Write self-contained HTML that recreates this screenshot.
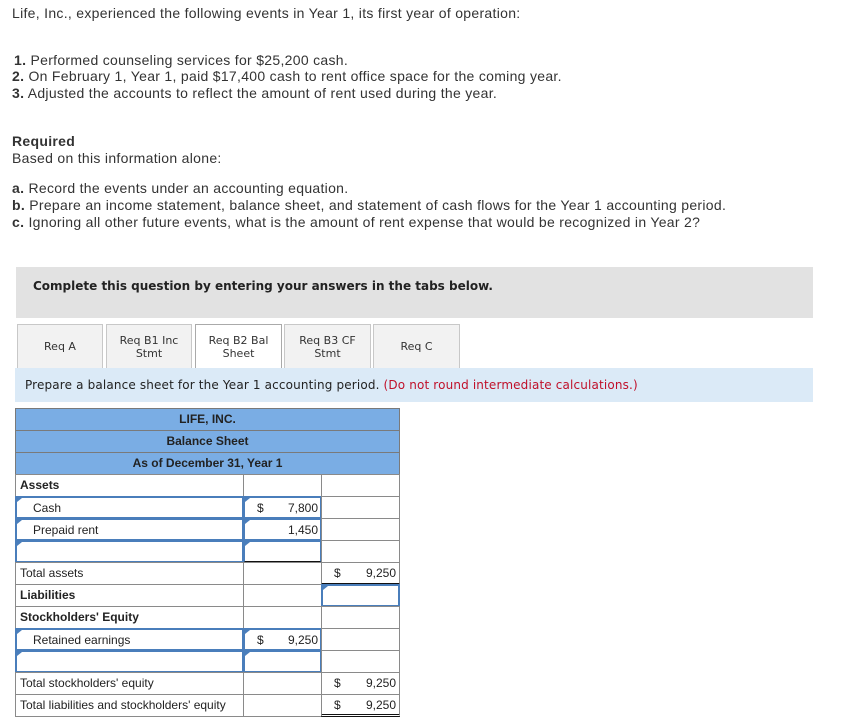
<!DOCTYPE html>
<html><head><meta charset="utf-8"><style>
body{margin:0;width:856px;height:724px;background:#fff;position:relative;font-family:"Liberation Sans",Arial,sans-serif;color:#333;overflow:hidden}
.t{position:absolute;font-size:14px;letter-spacing:0.3px;white-space:nowrap;line-height:16px}
.c{position:absolute;box-sizing:border-box;font-size:12px;line-height:20px;color:#222;white-space:nowrap}
.g{border:1px solid #8a8a8a}
.h{background:#7aade4;border:1px solid #7a7a7a;text-align:center;font-weight:bold;color:#222}
.in{border:2px solid #4a7ebb;background:#fff}
.in:before{content:"";position:absolute;left:0;top:0;border-left:5px solid #4a7ebb;border-bottom:4px solid transparent;border-top:0;width:0;height:0}
.tab{position:absolute;top:324px;height:44px;box-sizing:border-box;background:#f2f2f2;border:1px solid #c8c8c8;border-bottom:none;font-family:"DejaVu Sans",sans-serif;font-size:11px;line-height:13px;text-align:center;display:flex;align-items:center;justify-content:center;color:#333}
</style></head><body>
<div class="t" style="left:12px;top:5px">Life, Inc., experienced the following events in Year 1, its first year of operation:</div>
<div class="t" style="left:14px;top:52px"><b>1.</b> Performed counseling services for $25,200 cash.</div>
<div class="t" style="left:12px;top:68px"><b>2.</b> On February 1, Year 1, paid $17,400 cash to rent office space for the coming year.</div>
<div class="t" style="left:12px;top:85px"><b>3.</b> Adjusted the accounts to reflect the amount of rent used during the year.</div>
<div class="t" style="left:12px;top:133px"><b>Required</b></div>
<div class="t" style="left:12px;top:150px">Based on this information alone:</div>
<div class="t" style="left:12px;top:180px"><b>a.</b> Record the events under an accounting equation.</div>
<div class="t" style="left:12px;top:197px"><b>b.</b> Prepare an income statement, balance sheet, and statement of cash flows for the Year 1 accounting period.</div>
<div class="t" style="left:12px;top:214px"><b>c.</b> Ignoring all other future events, what is the amount of rent expense that would be recognized in Year 2?</div>

<div style="position:absolute;left:16px;top:267px;width:797px;height:51px;background:#e2e2e2"></div>
<div style="position:absolute;left:33px;top:279px;font-family:'DejaVu Sans',sans-serif;font-weight:bold;font-size:12px;color:#222">Complete this question by entering your answers in the tabs below.</div>

<div class="tab" style="left:17px;width:86px">Req A</div>
<div class="tab" style="left:106px;width:86px">Req B1 Inc<br>Stmt</div>
<div class="tab" style="left:195px;width:87px;background:#fff;border-color:#aaa;height:45px">Req B2 Bal<br>Sheet</div>
<div class="tab" style="left:284px;width:87px">Req B3 CF<br>Stmt</div>
<div class="tab" style="left:373px;width:87px">Req C</div>
<div style="position:absolute;left:15px;top:368px;width:798px;height:34px;background:#dbeaf7"></div>
<div style="position:absolute;left:25px;top:378px;font-family:'DejaVu Sans',sans-serif;font-size:12px;letter-spacing:0.15px;color:#222">Prepare a balance sheet for the Year 1 accounting period. <span style="color:#c0102a">(Do not round intermediate calculations.)</span></div>

<div class="c h" style="left:15px;top:408px;width:385px;height:23px">LIFE, INC.</div>
<div class="c h" style="left:15px;top:430px;width:385px;height:23px">Balance Sheet</div>
<div class="c h" style="left:15px;top:452px;width:385px;height:23px">As of December 31, Year 1</div>

<div class="c g" style="left:15px;top:474px;width:229px;height:23px;padding-left:4px;font-weight:bold">Assets</div>
<div class="c g" style="left:243px;top:474px;width:79px;height:23px"></div>
<div class="c g" style="left:321px;top:474px;width:79px;height:23px"></div>

<div class="c in" style="left:15px;top:496px;width:229px;height:23px;padding-left:16px">Cash</div>
<div class="c in" style="left:243px;top:496px;width:79px;height:23px;padding:0 2px 0 12px">$<span style="float:right">7,800</span></div>
<div class="c g" style="left:321px;top:496px;width:79px;height:23px"></div>

<div class="c in" style="left:15px;top:518px;width:229px;height:23px;padding-left:16px">Prepaid rent</div>
<div class="c in" style="left:243px;top:518px;width:79px;height:23px;padding:0 2px 0 12px"><span style="float:right">1,450</span></div>
<div class="c g" style="left:321px;top:518px;width:79px;height:23px"></div>

<div class="c in" style="left:15px;top:540px;width:229px;height:23px"></div>
<div class="c in" style="left:243px;top:540px;width:79px;height:23px;border-bottom:2px solid #111"></div>
<div class="c g" style="left:321px;top:540px;width:79px;height:23px"></div>

<div class="c g" style="left:15px;top:562px;width:229px;height:23px;padding-left:4px">Total assets</div>
<div class="c g" style="left:243px;top:562px;width:79px;height:23px"></div>
<div class="c g" style="left:321px;top:562px;width:79px;height:23px;padding:0 3px 0 12px;border-bottom:2px solid #111">$<span style="float:right">9,250</span></div>

<div class="c g" style="left:15px;top:584px;width:229px;height:23px;padding-left:4px;font-weight:bold">Liabilities</div>
<div class="c g" style="left:243px;top:584px;width:79px;height:23px"></div>
<div class="c in" style="left:321px;top:584px;width:79px;height:23px"></div>

<div class="c g" style="left:15px;top:606px;width:229px;height:23px;padding-left:4px;font-weight:bold">Stockholders' Equity</div>
<div class="c g" style="left:243px;top:606px;width:79px;height:23px"></div>
<div class="c g" style="left:321px;top:606px;width:79px;height:23px"></div>

<div class="c in" style="left:15px;top:628px;width:229px;height:23px;padding-left:16px">Retained earnings</div>
<div class="c in" style="left:243px;top:628px;width:79px;height:23px;padding:0 2px 0 12px">$<span style="float:right">9,250</span></div>
<div class="c g" style="left:321px;top:628px;width:79px;height:23px"></div>

<div class="c in" style="left:15px;top:650px;width:229px;height:23px"></div>
<div class="c in" style="left:243px;top:650px;width:79px;height:23px"></div>
<div class="c g" style="left:321px;top:650px;width:79px;height:23px"></div>

<div class="c g" style="left:15px;top:672px;width:229px;height:23px;padding-left:4px">Total stockholders' equity</div>
<div class="c g" style="left:243px;top:672px;width:79px;height:23px"></div>
<div class="c g" style="left:321px;top:672px;width:79px;height:23px;padding:0 3px 0 12px">$<span style="float:right">9,250</span></div>

<div class="c g" style="left:15px;top:694px;width:229px;height:23px;padding-left:4px">Total liabilities and stockholders' equity</div>
<div class="c g" style="left:243px;top:694px;width:79px;height:23px"></div>
<div class="c g" style="left:321px;top:694px;width:79px;height:23px;padding:0 3px 0 12px;border-bottom:3px double #111">$<span style="float:right">9,250</span></div>
</body></html>
